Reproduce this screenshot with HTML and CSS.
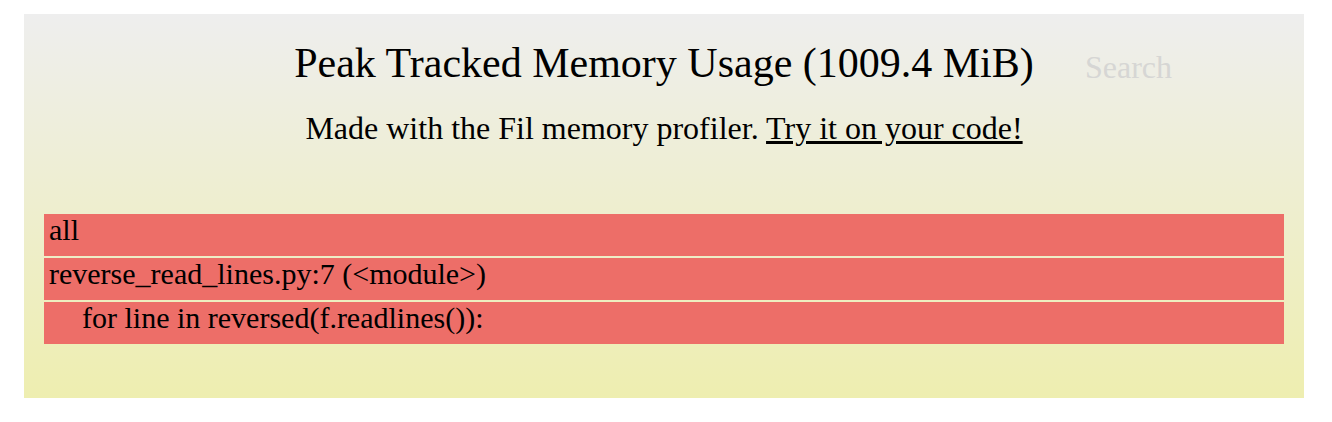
FILE: index.html
```html
<!DOCTYPE html>
<html>
<head>
<meta charset="utf-8">
<link rel="stylesheet" href="styles.css">
</head>
<body>
<div class="graph">
  <div class="header">
    <div class="title">Peak Tracked Memory Usage (1009.4 MiB)</div>
    <div class="search">Search</div>
    <div class="subtitle">Made with the Fil memory profiler. <a href="#">Try it on your code!</a></div>
  </div>
  <div class="frames">
    <div class="frame">all</div>
    <div class="frame">reverse_read_lines.py:7 (&lt;module&gt;)</div>
    <div class="frame code">    for line in reversed(f.readlines()):</div>
  </div>
</div>
</body>
</html>
```
FILE: styles.css
```css
html, body {
  margin: 0;
  padding: 0;
  background: #ffffff;
}
body {
  font-family: "Liberation Serif", "Times New Roman", serif;
  color: #000;
}
.graph {
  position: relative;
  margin: 14px 0 0 24px;
  width: 1280px;
  height: 384px;
  background: linear-gradient(to bottom, #eeeeee, #eeeeb0);
  box-sizing: border-box;
}
.header {
  padding-top: 28px;
  text-align: center;
}
.title {
  font-size: 42px;
  line-height: 42px;
}
.search {
  position: absolute;
  left: 1061px;
  top: 37px;
  font-size: 32px;
  line-height: 32px;
  color: #d6d6d4;
}
.subtitle {
  margin-top: 28px;
  font-size: 32px;
  line-height: 32px;
}
.subtitle a {
  color: #000;
  text-decoration: underline;
}
.frames {
  position: absolute;
  left: 20px;
  right: 20px;
  top: 200px;
  display: flex;
  flex-direction: column;
  gap: 2px;
}
.frame {
  height: 42px;
  box-sizing: border-box;
  background: #ed6e68;
  font-size: 30px;
  line-height: 32px;
  padding-left: 5px;
  white-space: pre;
  overflow: hidden;
}
.frame.code {
  padding-left: 8px;
}
```
